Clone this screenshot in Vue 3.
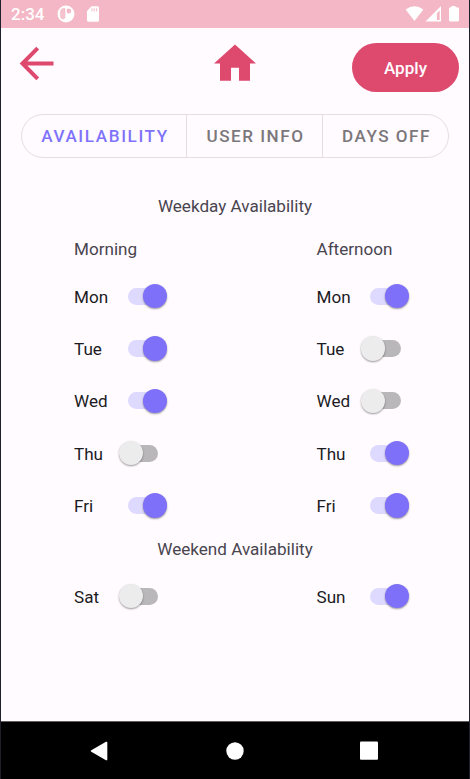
<script setup>
import { ref } from 'vue'

const tabs = ['AVAILABILITY', 'USER INFO', 'DAYS OFF']
const active = ref(0)
const columns = ref([
  { title: 'Morning', days: [['Mon', true], ['Tue', true], ['Wed', true], ['Thu', false], ['Fri', true]] },
  { title: 'Afternoon', days: [['Mon', true], ['Tue', false], ['Wed', false], ['Thu', true], ['Fri', true]] }
])
const weekend = ref([['Sat', false], ['Sun', true]])
</script>

<template>
  <div class="screen">
    <header class="status">
      <span class="time">2:34</span>
      <svg class="app-icon" width="18" height="18" viewBox="0 0 18 18">
        <circle cx="9" cy="9" r="8.500" fill="#fff" />
        <path d="M8 3.500H6Q3.500 4 3.500 6.500v4.500q0 3 2.300 3 2.200 0 2.200-2.500z" fill="#f6c4cf" stroke="#f4b7c5" stroke-width=".6" />
        <path d="M9.900 3.800h2a2.300 2.300 0 0 1 0 4.600q-1.200 0-2-1z" fill="#f4b7c5" />
      </svg>
      <svg class="sd-icon" width="12" height="16" viewBox="0 0 12 16">
        <path d="M4.500.3H10.500Q12 .3 12 1.800V14.200Q12 15.700 10.500 15.700H1.500Q0 15.700 0 14.200V5z" fill="#fff" />
        <path d="M5 2.400v2.900M7.300 2.400v2.900M9.600 2.400v2.900" stroke="#f4b7c5" stroke-width="1" />
      </svg>
      <svg class="signals" width="56" height="18" viewBox="0 0 56 18">
        <path d="M.6 4.600Q9.500-2.200 18.400 4.600L9.500 16z" fill="#fff" />
        <path d="M36 1v15.500H20.500z" fill="#fff" />
        <path d="M34.700 5.500v9.500h-2.800V8.300z" fill="#f4b7c5" />
        <path d="M46.500 1h4v1.200h2q1.500 0 1.500 1.500v11.300q0 1.500-1.500 1.500h-7q-1.500 0-1.500-1.500V3.700q0-1.500 1.500-1.500h1z" fill="#fff" />
      </svg>
    </header>

    <nav class="toolbar">
      <svg class="back" width="35" height="36" viewBox="0 0 35 36">
        <path d="M34.500 17.500H4M18.700 2.200 3.500 17.500l15.200 15.300" fill="none" stroke="#de496e" stroke-width="4" />
      </svg>
      <svg class="home" width="42" height="37" viewBox="0 0 42 37">
        <path d="M21 .5 42 19.500H36V36.700H25V23.700H17V36.700H6V19.500H0z" fill="#de496e" />
      </svg>
      <button class="apply">Apply</button>
    </nav>

    <div class="tabs">
      <button v-for="(tab, i) in tabs" :key="tab" class="tab" :class="{ active: active === i }" @click="active = i">{{ tab }}</button>
    </div>

    <main class="content">
      <h2 class="section">Weekday Availability</h2>
      <div class="columns">
        <section v-for="col in columns" :key="col.title" class="column">
          <h3 class="column-title">{{ col.title }}</h3>
          <div v-for="day in col.days" :key="day[0]" class="day">
            <span class="label">{{ day[0] }}</span>
            <span class="switch" :class="{ on: day[1] }" @click="day[1] = !day[1]"><i class="thumb"></i></span>
          </div>
        </section>
      </div>
      <h2 class="section weekend-title">Weekend Availability</h2>
      <div class="columns">
        <div v-for="day in weekend" :key="day[0]" class="column day">
          <span class="label">{{ day[0] }}</span>
          <span class="switch" :class="{ on: day[1] }" @click="day[1] = !day[1]"><i class="thumb"></i></span>
        </div>
      </div>
    </main>

    <footer class="system">
      <svg width="18" height="20" viewBox="0 0 18 20"><path d="M1.300 9.200 16 .8Q17.300.3 17.300 1.500v17q0 1.200-1.300.7L1.300 10.800Q0 10 1.300 9.200z" fill="#fff" /></svg>
      <svg width="20" height="18" viewBox="0 0 20 18"><circle cx="11" cy="9" r="8.700" fill="#fff" /></svg>
      <svg width="18" height="19" viewBox="0 0 18 19"><rect y=".4" width="18" height="18.400" rx="1" fill="#fff" /></svg>
    </footer>
  </div>
</template>

<style>
body { margin: 0; }
</style>

<style scoped>
.screen {
  box-sizing: border-box;
  width: 470px;
  height: 779px;
  display: flex;
  flex-direction: column;
  border: solid #20202c;
  border-width: 0 1px;
  background: #fffbff;
  font-family: Roboto, sans-serif;
  font-size: 17.1px;
  color: #1c1b1f;
  overflow: hidden;
}
.status {
  display: flex;
  height: 28px;
  flex: none;
  background: #f4b7c5;
  color: #fff;
}
.time {
  width: 46px;
  padding-left: 10px;
  font-size: 17px;
  font-weight: 500;
  line-height: 29px;
}
.app-icon { margin: 5px 0 0 0; }
.sd-icon { margin: 6px 0 0 12px; }
.signals { margin: 5px 8px 0 auto; }
.toolbar {
  display: flex;
  height: 85px;
  flex: none;
}
.back { margin: 18px 0 0 18px; }
.home { margin: 16px 0 0 160px; }
.apply {
  width: 107px;
  height: 49px;
  margin: 15px 10px 0 auto;
  padding: 1px 0 0;
  border: 0;
  border-radius: 25px;
  background: #de496e;
  color: #fffbff;
  font: 500 17.1px Roboto, sans-serif;
}
.tabs {
  box-sizing: border-box;
  display: grid;
  grid-template-columns: 164px 136px 1fr;
  width: 428px;
  height: 44px;
  flex: none;
  margin: 1px 0 0 20px;
  border: 1px solid #e4dee4;
  border-radius: 22px;
}
.tab {
  padding: 0 0 0 2px;
  border: 0;
  border-left: 1px solid #e4dee4;
  background: none;
  color: #7b777b;
  font: 500 17.1px Roboto, sans-serif;
  letter-spacing: 1.5px;
  white-space: nowrap;
}
.tab:first-child {
  border-left: 0;
  letter-spacing: 1.6px;
}
.tab.active { color: #8073fb; }
.content { flex: 1; }
.section, .column-title {
  margin: 0;
  font-size: 17.1px;
  font-weight: 400;
  color: #49454f;
}
.section {
  padding-top: 37px;
  line-height: 22px;
  text-align: center;
}
.columns {
  display: grid;
  grid-template-columns: 242.500px 1fr;
  padding-left: 73px;
}
.column-title {
  padding-top: 20px;
  line-height: 24px;
}
.day {
  display: flex;
  align-items: center;
  height: 52.400px;
}
.column-title + .day { margin-top: 9px; }
.label {
  width: 53.500px;
  padding-top: 1px;
}
.switch {
  position: relative;
  width: 30.500px;
  height: 17px;
  border-radius: 9px;
  background: #b9b7b9;
}
.thumb {
  position: absolute;
  left: -9px;
  top: -3.800px;
  width: 24.300px;
  height: 24.300px;
  border-radius: 50%;
  background: #ececec;
  box-shadow: 0 1px 2px rgba(0, 0, 0, .4);
}
.switch.on { background: #ded9fe; }
.switch.on .thumb {
  left: 15.200px;
  background: #7f70fa;
}
.weekend-title { padding-top: 6.300px; }
.weekend-title + .columns { padding-top: 10px; }
.system {
  box-sizing: border-box;
  display: flex;
  align-items: center;
  justify-content: space-between;
  height: 58px;
  flex: none;
  padding: 0 91px 0 89px;
  border-top: 1px solid #605e60;
  background: #000;
}
</style>
